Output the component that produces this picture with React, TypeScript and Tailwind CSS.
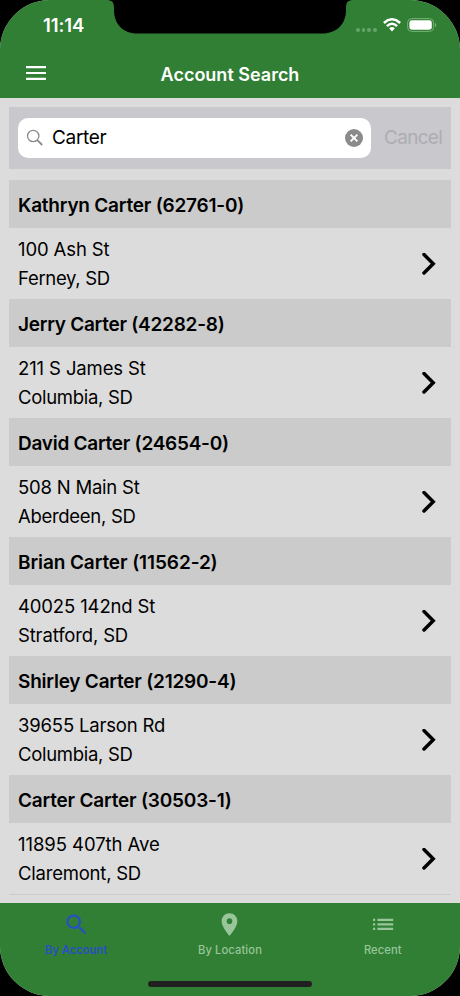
type Account = {
  name: string;
  street: string;
  city: string;
  nameTracking: string;
  streetTracking: string;
  cityTracking: string;
};

const accounts: Account[] = [
  { name: "Kathryn Carter (62761-0)", street: "100 Ash St", city: "Ferney, SD", nameTracking: "tracking-[-0.22px]", streetTracking: "tracking-[-0.12px]", cityTracking: "tracking-[-0.3px]" },
  { name: "Jerry Carter (42282-8)", street: "211 S James St", city: "Columbia, SD", nameTracking: "tracking-[-0.26px]", streetTracking: "tracking-[-0.12px]", cityTracking: "tracking-[-0.3px]" },
  { name: "David Carter (24654-0)", street: "508 N Main St", city: "Aberdeen, SD", nameTracking: "tracking-[-0.26px]", streetTracking: "tracking-[-0.22px]", cityTracking: "tracking-[-0.3px]" },
  { name: "Brian Carter (11562-2)", street: "40025 142nd St", city: "Stratford, SD", nameTracking: "tracking-[-0.1px]", streetTracking: "tracking-[-0.14px]", cityTracking: "tracking-[-0.15px]" },
  { name: "Shirley Carter (21290-4)", street: "39655 Larson Rd", city: "Columbia, SD", nameTracking: "tracking-[-0.22px]", streetTracking: "tracking-[-0.18px]", cityTracking: "tracking-[-0.3px]" },
  { name: "Carter Carter (30503-1)", street: "11895 407th Ave", city: "Claremont, SD", nameTracking: "tracking-[-0.2px]", streetTracking: "tracking-[-0.06px]", cityTracking: "tracking-[-0.22px]" },
];

function Notch() {
  return (
    <svg className="absolute left-[106px] top-0" width="248" height="35" viewBox="0 0 248 35">
      <path d="M0 0C6 0 8 2 8 8V10C8 24 17 33.5 31 33.5H216C231 33.5 240 24 240 10V8C240 2 242 0 248 0Z" fill="#000" />
    </svg>
  );
}

function StatusBar() {
  return (
    <div className="flex h-[50px] items-center justify-between pl-[43px] pr-[23px]">
      <span className="pt-px text-[18.5px] font-semibold leading-none tracking-[-0.1px]">11:14</span>
      <div className="flex items-center">
        <div className="mr-[6px] mt-[10px] flex gap-[2px]">
          {[0, 1, 2, 3].map((i) => (
            <span key={i} className="size-[3.8px] rounded-full bg-[#65a668]" />
          ))}
        </div>
        <svg width="18" height="14" viewBox="0 0 18 14" fill="none" stroke="#fff" strokeWidth="2.5">
          <path d="M0.9 5Q9 -2.4 17.1 5" />
          <path d="M3.9 8.2Q9 3.4 14.1 8.2" />
          <path d="M6.1 10.3Q9 7.8 11.9 10.3L9 13.4Z" fill="#fff" stroke="none" />
        </svg>
        <svg className="ml-[6px]" width="30" height="14" viewBox="0 0 30 14">
          <rect x="0.6" y="0.6" width="26" height="12.8" rx="4" fill="none" stroke="#75b078" strokeWidth="1" />
          <rect x="2.4" y="2.3" width="22.4" height="9.4" rx="2.4" fill="#fff" />
          <path d="M28 4.8C29.8 5.6 29.8 8.4 28 9.2Z" fill="#75b078" />
        </svg>
      </div>
    </div>
  );
}

function SearchBar() {
  return (
    <div className="flex h-[62px] items-center bg-[#c8c8cd] pl-[9px]">
      <div className="flex h-10 w-[353px] shrink-0 items-center rounded-[10px] bg-white pl-2 pr-[8px]">
        <svg width="18" height="18" viewBox="0 0 18 18" fill="none" stroke="#8b8b8f" strokeWidth="1.3">
          <circle cx="7.2" cy="7" r="5.7" />
          <path d="M11.3 11.2L16.2 16" strokeWidth="1.8" />
        </svg>
        <span className="ml-2 flex-1 pb-px text-[19px] leading-none tracking-[-0.3px]">Carter</span>
        <svg width="18" height="18" viewBox="0 0 18 18">
          <circle cx="9" cy="9" r="9" fill="#8b8b8d" />
          <path d="M5.6 5.6L12.4 12.4M12.4 5.6L5.6 12.4" stroke="#fff" strokeWidth="1.9" />
        </svg>
      </div>
      <span className="ml-[13px] whitespace-nowrap pb-px text-[19px] leading-none tracking-[-0.7px] text-[#adadb2]">Cancel</span>
    </div>
  );
}

function AccountRow({ account }: { account: Account }) {
  return (
    <section>
      <h2 className="flex h-12 items-center bg-[#cbcbcb] pl-[9px] pt-[4px] text-[19px] font-semibold">
        <span className={account.nameTracking}>{account.name}</span>
      </h2>
      <div className="flex h-[71px] items-center justify-between pl-[9px] pr-[15px]">
        <div className="pt-px text-[18.5px] leading-[29px]">
          <p className={account.streetTracking}>{account.street}</p>
          <p className={account.cityTracking}>{account.city}</p>
        </div>
        <svg width="14" height="22" viewBox="0 0 14 22" fill="none" stroke="#000" strokeWidth="3.5" strokeLinecap="round">
          <path d="M2 1.6L11.2 10.8L2 20" />
        </svg>
      </div>
    </section>
  );
}

function TabBar() {
  return (
    <nav className="relative grid h-[93px] grid-cols-3 bg-[#317f34] text-[11.2px] font-medium text-[#98c59a]">
      <div className="flex flex-col items-center pt-[8px] pr-px text-[#284fc4]">
        <svg width="27" height="27" viewBox="0 0 24 24" fill="currentColor">
          <path d="M15.5 14h-.79l-.28-.27A6.47 6.47 0 0 0 16 9.5 6.5 6.5 0 1 0 9.5 16c1.61 0 3.09-.59 4.23-1.57l.27.28v.79l5 4.99L20.49 19l-4.99-5zm-6 0C7.01 14 5 11.99 5 9.5S7.01 5 9.5 5 14 7.01 14 9.5 11.99 14 9.5 14z" />
        </svg>
        <span className="mt-[4px] font-semibold leading-4">By Account</span>
      </div>
      <div className="flex flex-col items-center pt-[8px]">
        <svg width="27" height="27" viewBox="0 0 24 24" fill="currentColor">
          <path d="M12 2C8.13 2 5 5.13 5 9c0 5.25 7 13 7 13s7-7.75 7-13c0-3.87-3.13-7-7-7zm0 9.5a2.5 2.5 0 1 1 0-5 2.5 2.5 0 0 1 0 5z" />
        </svg>
        <span className="mt-[4px] leading-4 tracking-[0.1px]">By Location</span>
      </div>
      <div className="flex flex-col items-center pt-[8px] pr-px">
        <svg width="26" height="26" viewBox="0 0 26 26" fill="currentColor">
          <path d="M3 7.8h2.2V10H3zM3 12.2h2.2v2.2H3zM3 16.8h2.2V19H3zM7.4 7.8h15.8V10H7.4zM7.4 12.2h15.8v2.2H7.4zM7.4 16.8h15.8V19H7.4z" />
        </svg>
        <span className="mt-[5px] leading-4 tracking-[0.1px]">Recent</span>
      </div>
      <div className="absolute bottom-[9px] left-[148px] h-[6px] w-[164px] rounded-full bg-[#202020]" />
    </nav>
  );
}

export default function App() {
  return (
    <div className="h-[996px] w-[460px] bg-black">
      <div className="relative flex h-full flex-col overflow-hidden rounded-[50px] bg-[#dcdcdc] font-['Inter','Liberation_Sans',sans-serif] text-black">
        <header className="h-[98px] shrink-0 bg-[#317f34] text-white">
          <StatusBar />
          <div className="grid h-12 grid-cols-[1fr_auto_1fr] items-center">
            <svg className="mb-[2px] ml-[26px]" width="20" height="14" viewBox="0 0 20 14" fill="#fff">
              <path d="M0 0h20v2.2H0zM0 5.9h20v2.2H0zM0 11.8h20V14H0z" />
            </svg>
            <h1 className="text-[18px] font-semibold">Account Search</h1>
          </div>
        </header>
        <Notch />
        <main className="flex-1 px-[9px] pt-[9px]">
          <SearchBar />
          <div className="mt-[11px] border-b border-[#cbcbcb]">
            {accounts.map((account) => (
              <AccountRow key={account.name} account={account} />
            ))}
          </div>
        </main>
        <TabBar />
      </div>
    </div>
  );
}
